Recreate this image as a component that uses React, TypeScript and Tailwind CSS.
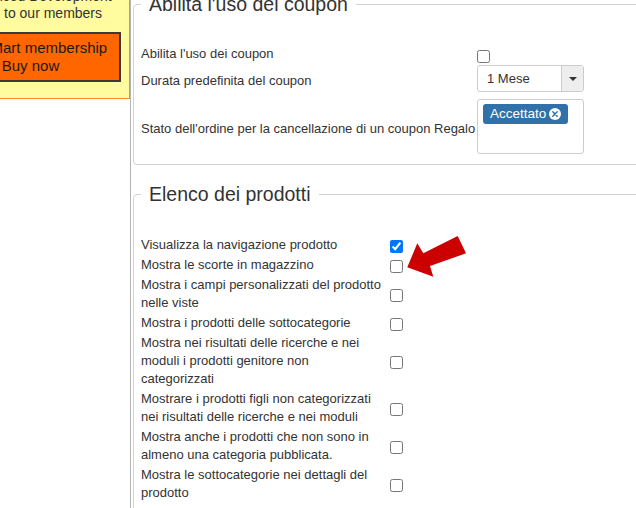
import clsx from 'clsx';

const PRODUCT_ROWS = [
  { label: 'Visualizza la navigazione prodotto', checked: true },
  { label: 'Mostra le scorte in magazzino', checked: false },
  { label: 'Mostra i campi personalizzati del prodotto nelle viste', checked: false },
  { label: 'Mostra i prodotti delle sottocategorie', checked: false },
  { label: 'Mostra nei risultati delle ricerche e nei moduli i prodotti genitore non categorizzati', checked: false },
  { label: 'Mostrare i prodotti figli non categorizzati nei risultati delle ricerche e nei moduli', checked: false },
  { label: 'Mostra anche i prodotti che non sono in almeno una categoria pubblicata.', checked: false },
  { label: 'Mostra le sottocategorie nei dettagli del prodotto', checked: false },
];

function Check({ checked = false, className }: { checked?: boolean; className?: string }) {
  return <input type="checkbox" defaultChecked={checked} className={clsx('h-[13px] w-[13px] shrink-0', className)} />;
}

function Fieldset({ legend, className, children }: { legend: string; className?: string; children: React.ReactNode }) {
  return (
    <fieldset className={clsx('ml-[2px] w-[560px] rounded-[4px] border border-[#d2d2d2] px-[7px]', className)}>
      <legend className="px-2 text-[19.5px] leading-[22px] text-[#333]">{legend}</legend>
      {children}
    </fieldset>
  );
}

function TagClose() {
  return (
    <svg width="12" height="12" viewBox="0 0 12 12">
      <circle cx="6" cy="6" r="6" fill="#fff" />
      <path d="M3.8 3.8 8.2 8.2M8.2 3.8 3.8 8.2" stroke="#3071a9" strokeWidth="1.5" strokeLinecap="round" />
    </svg>
  );
}

export default function App() {
  return (
    <div className="relative flex h-[508px] w-[636px] overflow-hidden bg-white font-['Liberation_Sans',Arial,sans-serif] text-[#333]">
      {/* sidebar with the promo box */}
      <aside className="w-[131px] shrink-0 border-r border-[#b4b4b4]">
        <div className="-mt-[12px] w-[130px] border-r border-b border-[#f68b1f] bg-[#fffb9e] pb-[16px] text-[14px] leading-[17px]">
          <div className="-ml-[37px] whitespace-nowrap">Advanced Development</div>
          <div className="ml-[4px] whitespace-nowrap">to our members</div>
          <div className="-ml-[60px] mt-[10px] flex h-[50px] w-[181px] flex-col justify-center border-2 border-[#3a3a3a] bg-[#ff6600] text-center text-[15px] leading-[18px] text-[#1a1a1a]">
            <span className="whitespace-nowrap">JoomMart membership</span>
            <span>Buy now</span>
          </div>
        </div>
      </aside>

      <main className="-mt-[7px] flex-1 overflow-hidden text-[13px]">
        <Fieldset legend="Abilita l'uso dei coupon" className="pb-[10px]">
          <div className="mt-[29px] flex items-start">
            <div className="w-[336px] translate-y-px leading-[18px]">Abilita l'uso dei coupon</div>
            <Check className="mt-[6px]" />
          </div>
          <div className="mt-[2px] flex items-center">
            <div className="w-[336px] translate-y-px pt-[3px] leading-[18px]">Durata predefinita del coupon</div>
            <div className="flex h-[27px] w-[107px] overflow-hidden rounded-[3px] border border-[#ccc] bg-white">
              <div className="flex-1 pl-[9px] leading-[25px]">1 Mese</div>
              <div className="flex w-[22px] items-center justify-center border-l border-[#ccc] bg-[#eee]">
                <span className="h-0 w-0 border-x-[4px] border-t-[4px] border-x-transparent border-t-[#333]" />
              </div>
            </div>
          </div>
          <div className="mt-[7px] flex items-center">
            <div className="w-[336px] translate-y-px pt-[3px] leading-[18px]">Stato dell'ordine per la cancellazione di un coupon Regalo</div>
            <div className="h-[55px] w-[107px] rounded-[3px] border border-[#ccc] bg-white px-[5px] pt-[4px]">
              <span className="inline-flex h-[20px] items-center gap-[3px] rounded-[3px] bg-[#3071a9] pl-[7px] pr-[7px] text-[13.5px] text-white">
                Accettato
                <TagClose />
              </span>
            </div>
          </div>
        </Fieldset>

        <Fieldset legend="Elenco dei prodotti" className="mt-[18px] pb-[10px]">
          <div className="mt-[30px] flex flex-col gap-[2px]">
            {PRODUCT_ROWS.map((row) => (
              <div key={row.label} className="flex items-center">
                <div className="w-[244px] translate-y-px leading-[18px]">{row.label}</div>
                <Check checked={row.checked} className="ml-[5px] mt-[5px]" />
              </div>
            ))}
          </div>
        </Fieldset>
      </main>

      {/* annotation arrow */}
      <svg className="pointer-events-none absolute left-[405px] top-[234px]" width="64" height="46" viewBox="0 0 64 46">
        <polygon points="2.3,33.3 12.3,9.3 18.3,19.3 52.7,2 61,19.3 25,32 28.3,42.7" fill="#cc0000" />
      </svg>
    </div>
  );
}
